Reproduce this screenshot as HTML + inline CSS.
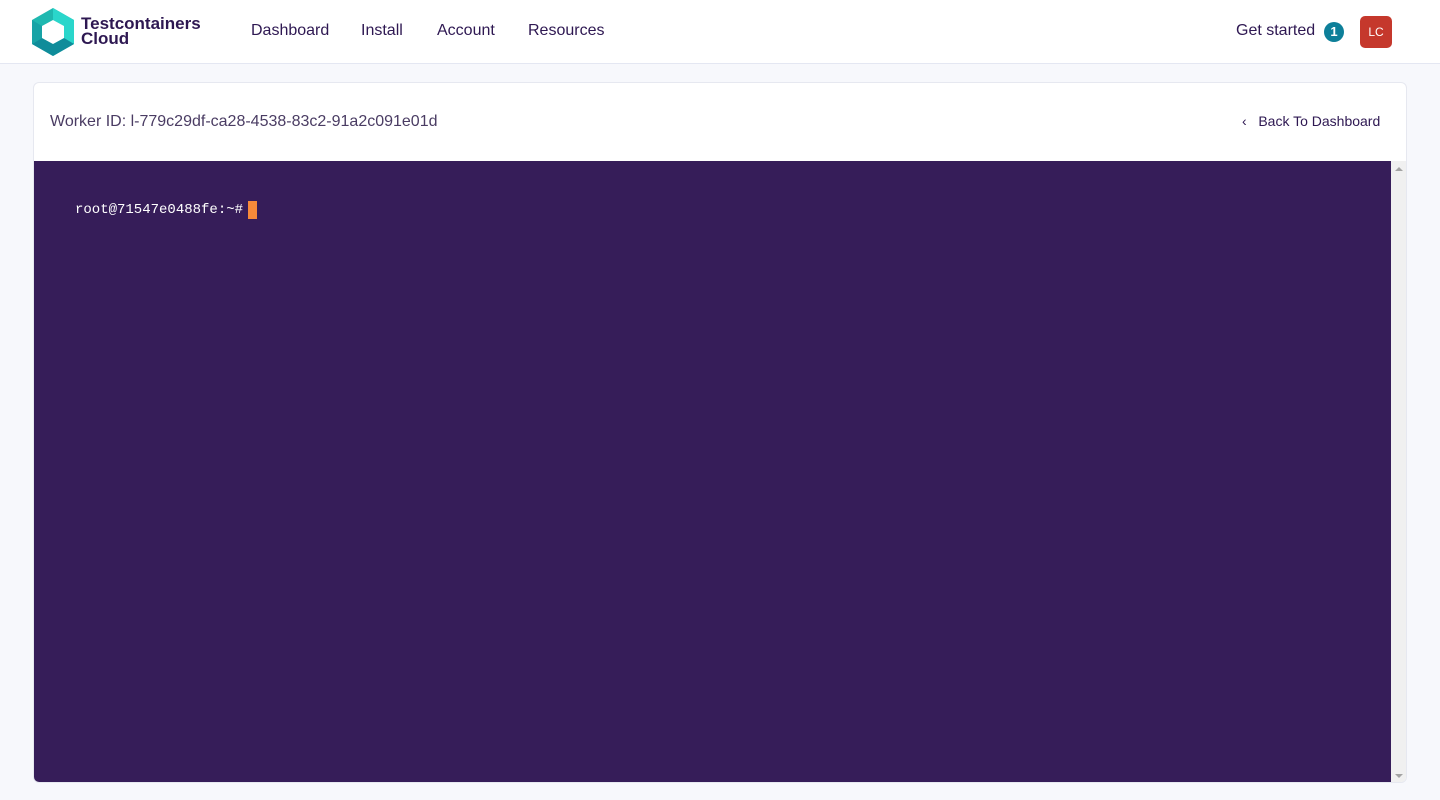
<!DOCTYPE html>
<html><head><meta charset="utf-8"><style>
*{margin:0;padding:0;box-sizing:border-box}
body{width:1440px;height:800px;background:#f7f8fc;font-family:"Liberation Sans",sans-serif;color:#2c1a4d;overflow:hidden;position:relative}
.hdr{position:absolute;left:0;top:0;width:1440px;height:64px;background:#fff;border-bottom:1px solid #e4e7f2}
.brand{position:absolute;left:81px;top:16px;font-weight:bold;font-size:17px;line-height:15px;color:#2e1852}
.nav{position:absolute;top:22px;font-size:16px;color:#2e1852}
.card{position:absolute;left:33px;top:82px;width:1374px;height:701px;background:#fff;border:1px solid #e6e8f0;border-radius:6px;overflow:hidden}
.term{position:absolute;left:0;top:78px;width:1357px;height:623px;background:#361d59}
.sb{position:absolute;left:1357px;top:78px;width:17px;height:623px;background:#f0f0f0}
</style></head><body>
<div class="hdr">
<svg style="position:absolute;left:31px;top:8px" width="44" height="48" viewBox="0 0 44 48">
<polygon points="22,0 43,12 43,36 22,48 1,36 1,12" fill="#1fb8b0"/>
<polygon points="22,0 43,12 43,36 33,30 33,18 22,12" fill="#2ad6cb"/>
<polygon points="1,36 22,48 43,36 33,30 22,36 11,30" fill="#0f8c9a"/>
<polygon points="1,12 11,18 11,30 1,36" fill="#17a3a6"/>
<polygon points="22,12 33,18 33,30 22,36 11,30 11,18" fill="#fff"/>
</svg>
<div class="brand">Testcontainers<br>Cloud</div>
<div class="nav" style="left:251px">Dashboard</div>
<div class="nav" style="left:361px">Install</div>
<div class="nav" style="left:437px">Account</div>
<div class="nav" style="left:528px">Resources</div>
<div class="nav" style="left:1236px">Get started</div>
<div style="position:absolute;left:1324px;top:22px;width:20px;height:20px;border-radius:50%;background:#0d7f99;color:#fff;font-size:13px;font-weight:bold;text-align:center;line-height:20px">1</div>
<div style="position:absolute;left:1360px;top:16px;width:32px;height:32px;border-radius:5px;background:#c5382c;color:#fff;font-size:12px;text-align:center;line-height:32px">LC</div>
</div>
<div class="card">
<div style="position:absolute;left:16px;top:30px;font-size:16px;color:#4a3c63">Worker ID: l-779c29df-ca28-4538-83c2-91a2c091e01d</div>
<div style="position:absolute;left:1208px;top:30px;font-size:14px;color:#2e1852">&lsaquo;&nbsp;&nbsp;&nbsp;Back To Dashboard</div>
<div class="term">
<div style="position:absolute;left:41px;top:41px;font-family:'Liberation Mono',monospace;font-size:14px;color:#fff">root@71547e0488fe:~#</div>
<div style="position:absolute;left:214px;top:40px;width:9px;height:18px;background:#f78a3a"></div>
</div>
<div class="sb"><div style="position:absolute;left:4px;top:6px;border:4px solid transparent;border-bottom:4px solid #a3a3a3;border-top:0"></div><div style="position:absolute;left:4px;bottom:6px;border:4px solid transparent;border-top:4px solid #a3a3a3;border-bottom:0"></div></div>
</div>
</body></html>
